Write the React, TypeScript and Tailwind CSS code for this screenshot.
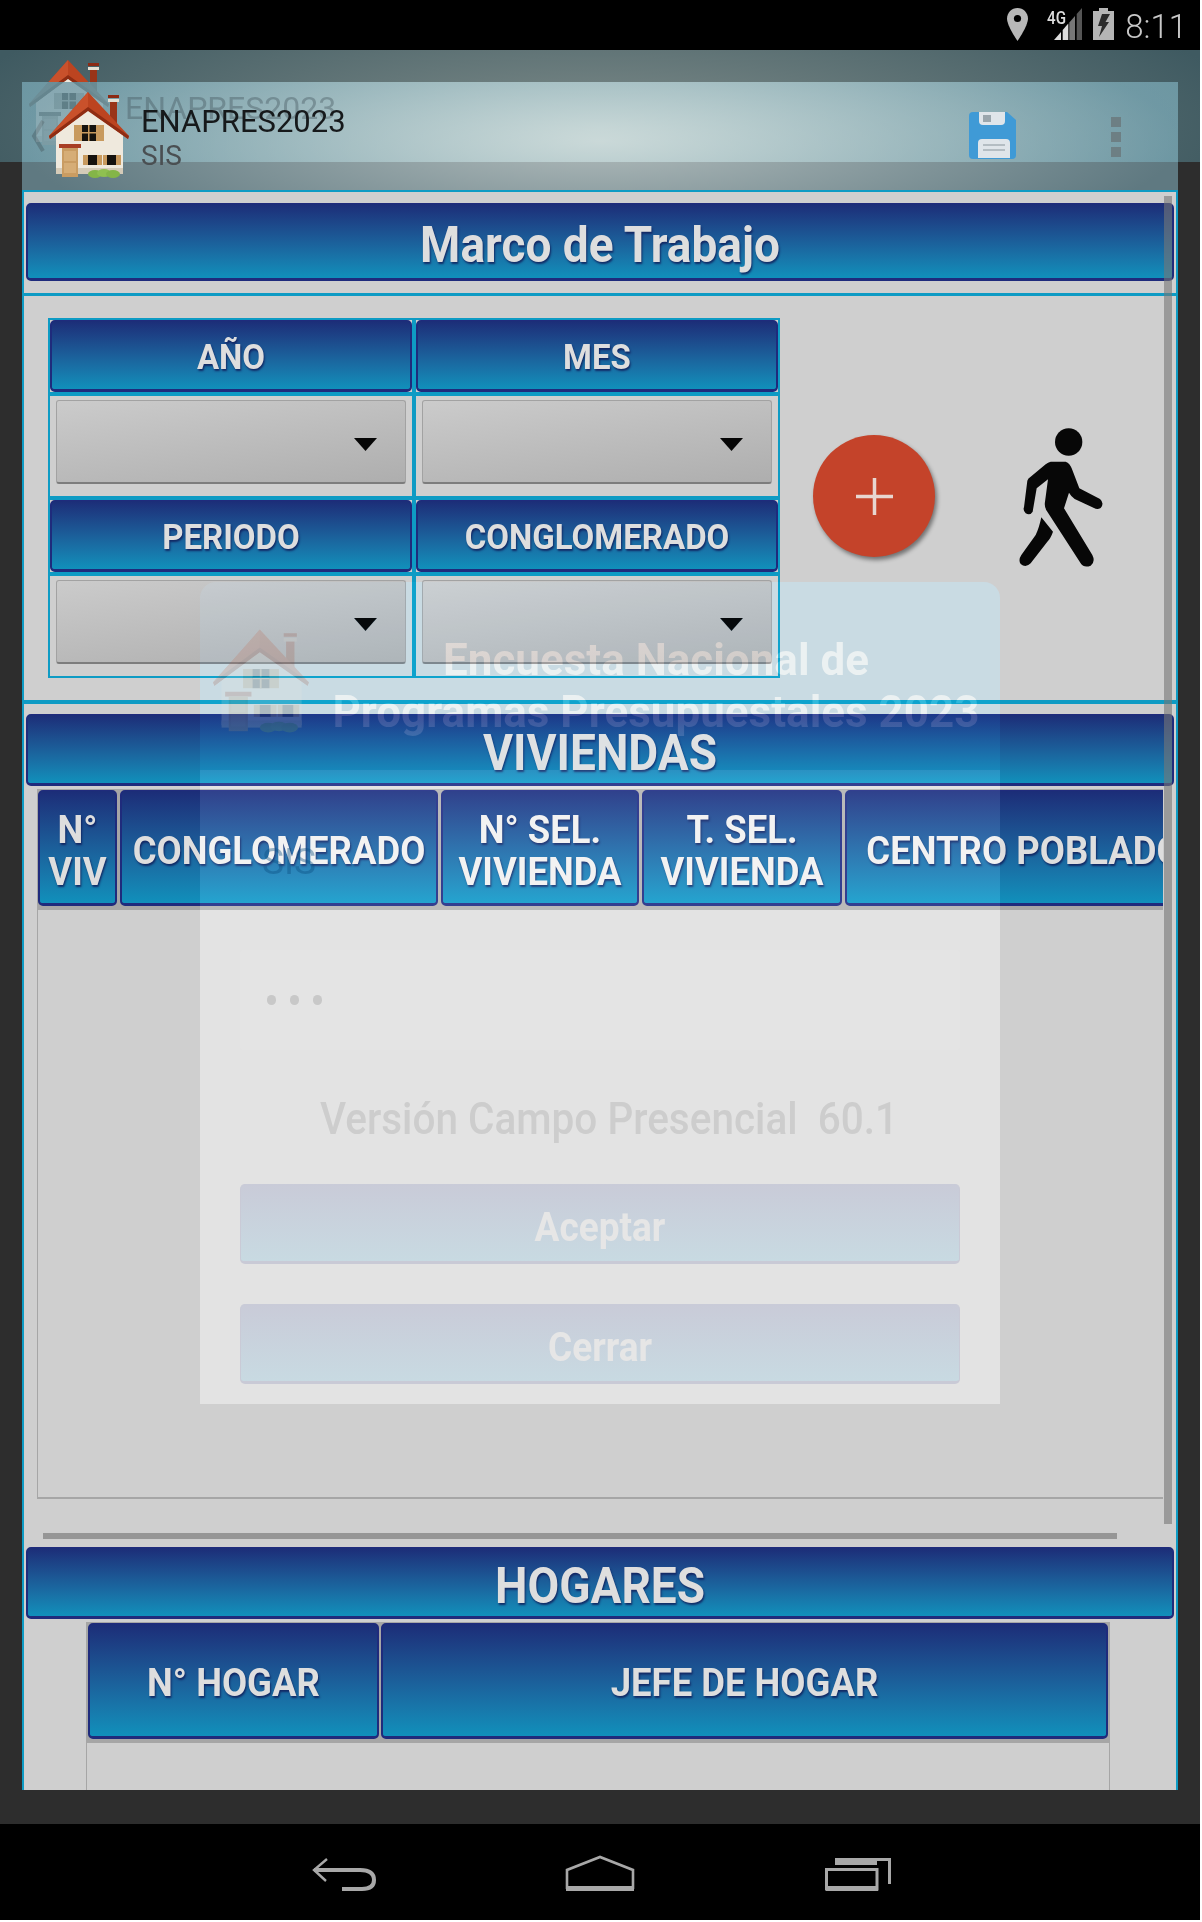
const CYAN = "border-[#0e9bc4]";
const BLUE_HEAD =
  "flex items-center justify-center rounded-[5px] border-x-2 border-t border-b-[3px] border-[#1f2b7c] bg-linear-to-b from-[#1c2d78] to-[#1090bb] text-center font-bold text-[#dedede] [text-shadow:1px_2px_2px_rgba(16,30,90,0.85)]";

function House({ className }: { className?: string }) {
  return (
    <svg viewBox="0 0 82 86" className={className}>
      <rect x="62" y="8" width="7" height="24" fill="#9a3418" />
      <rect x="60" y="3" width="11" height="3" fill="#8c2a14" />
      <rect x="60" y="7" width="11" height="3" fill="#e6dfd2" />
      <polygon points="8,40 40,14 75,40 75,80 8,80" fill="#efe9dd" />
      <rect x="8" y="76" width="67" height="6" fill="#d5cbb8" />
      <polygon points="40,0 81,44 80,47 40,18 2,47 1,44" fill="#bc4420" />
      <polygon points="40,0 1,44 2,47 40,18" fill="#c9512b" />
      <polygon points="40,19 2,47 1,44 40,15 81,44 80,47" fill="#8f2c12" />
      <rect x="26" y="33" width="30" height="16" fill="#c89a5e" />
      <rect x="34" y="33" width="14" height="16" fill="#15120e" />
      <rect x="34" y="40" width="14" height="1.5" fill="#c89a5e" />
      <rect x="40" y="33" width="1.5" height="16" fill="#c89a5e" />
      <rect x="11" y="52" width="22" height="4" fill="#a83e24" />
      <rect x="14" y="56" width="16" height="29" fill="#c99c62" />
      <rect x="16" y="59" width="12" height="10" fill="#d6ad76" />
      <rect x="16" y="71" width="12" height="10" fill="#d6ad76" />
      <rect x="35" y="63" width="19" height="10" fill="#c89a5e" />
      <rect x="40" y="63" width="9" height="10" fill="#15120e" />
      <rect x="55" y="63" width="18" height="10" fill="#c89a5e" />
      <rect x="59" y="63" width="9" height="10" fill="#15120e" />
      <ellipse cx="47" cy="82" rx="7" ry="4" fill="#84b548" />
      <ellipse cx="56" cy="81" rx="7" ry="4" fill="#8fc050" />
      <ellipse cx="65" cy="82" rx="7" ry="4" fill="#84b548" />
    </svg>
  );
}

function SaveIcon() {
  return (
    <svg viewBox="0 0 47 47" className="h-[47px] w-[47px]">
      <path d="M4 0H38L47 8V43Q47 47 43 47H4Q0 47 0 43V4Q0 0 4 0Z" fill="#3f9ad6" />
      <path d="M10 0H36V9Q36 13 32 13H14Q10 13 10 9Z" fill="#dfe5ea" />
      <rect x="14" y="3" width="8" height="7" fill="#9aa6ad" />
      <path d="M13 27H37Q41 27 41 31V46H9V31Q9 27 13 27Z" fill="#dfe5ea" />
      <rect x="14" y="32" width="22" height="2" fill="#b4bdc3" />
      <rect x="14" y="37" width="22" height="2" fill="#b4bdc3" />
    </svg>
  );
}

function StatusIcons() {
  return (
    <div className="flex items-start pt-2 pr-[13px]">
      <svg viewBox="0 0 21 33" className="h-[33px] w-[21px]">
        <path
          d="M10.5 0C4.7 0 0 4.7 0 10.5 0 18 10.5 33 10.5 33S21 18 21 10.5C21 4.7 16.3 0 10.5 0Z"
          fill="#b8b8b8"
        />
        <circle cx="10.5" cy="10.5" r="3.6" fill="#000" />
      </svg>
      <div className="relative ml-[26px] h-[32px] w-[28px]">
        <svg viewBox="0 0 28 32" className="h-[32px] w-[28px]">
          <polygon points="0,32 7,24 7,32" fill="#dcdcdc" />
          <polygon points="8.7,22 14.3,15.6 14.3,32 8.7,32" fill="#dcdcdc" />
          <polygon points="15.3,14.5 21,8 21,32 15.3,32" fill="#777" />
          <polygon points="22.7,6 28,0 28,32 22.7,32" fill="#555" />
        </svg>
        <span className="absolute top-[-3px] left-[-7px] origin-left scale-x-[0.8] text-[19px] leading-[26px] font-medium text-[#dcdcdc]">
          4G
        </span>
      </div>
      <svg viewBox="0 0 21 32" className="ml-[11px] h-[32px] w-[21px]">
        <path d="M6 0H15V3H21V32H0V3H6Z" fill="#b5b5b5" />
        <polygon points="9,6 17,6 12.5,14 16,14 6,29 9,18 5,18" fill="#2b2b2b" />
      </svg>
      <span className="ml-[11px] text-[33px] leading-[38px] font-light text-[#c8c8c8]">8:11</span>
    </div>
  );
}

function NavBar() {
  return (
    <div className="flex h-[96px] shrink-0 justify-center bg-black pt-[31px] pl-[2px]">
      <svg viewBox="0 0 64 33" className="mt-[3px] h-[33px] w-[64px]" fill="none" stroke="#a8a8a8">
        <path d="M15 1L2 12L14 23" strokeWidth="2.4" />
        <path d="M2 12H48Q62 12 62 22Q62 31 50 31H30" strokeWidth="4" />
      </svg>
      <svg viewBox="0 0 70 36" className="ml-[189px] h-[36px] w-[70px]" fill="none" stroke="#a8a8a8">
        <path d="M2 34V15L35 2L68 15V34" strokeWidth="2.6" />
        <path d="M1 33.5H69" strokeWidth="5" />
      </svg>
      <svg viewBox="0 0 66 33" className="mt-[3px] ml-[190px] h-[33px] w-[66px]" fill="none" stroke="#a8a8a8">
        <path d="M10 5H52" strokeWidth="4" />
        <path d="M10 1.5H64.5V26" strokeWidth="3" />
        <path d="M1.5 11.5H52V31H1.5Z" strokeWidth="3" />
        <path d="M1 30.5H53" strokeWidth="5" />
      </svg>
    </div>
  );
}

function SectionHeader({ title, tall }: { title: string; tall?: boolean }) {
  return (
    <div className={`${BLUE_HEAD} mx-[2px] ${tall ? "h-[78px]" : "h-[72px]"} pt-[7px] text-[46px] leading-none`}>
      <span className="scale-y-[1.08]">{title}</span>
    </div>
  );
}

function Spinner() {
  return (
    <div className="flex h-[84px] items-center justify-end rounded-[3px] border border-b-2 border-[#a2a2a2] border-b-[#7d7d7d] bg-[linear-gradient(172deg,#cbcbcb,#aeaeae)] pr-[28px]">
      <svg viewBox="0 0 23 13" className="mt-[5px] h-[13px] w-[23px]">
        <polygon points="0,0 23,0 11.5,13" fill="#060606" />
      </svg>
    </div>
  );
}

function FilterLabel({ text }: { text: string }) {
  return (
    <div className={`${BLUE_HEAD} h-[72px] pt-[2px] text-[33px] leading-none`}>
      <span className="scale-y-[1.08]">{text}</span>
    </div>
  );
}

function FilterTable() {
  const cell = `border-r-4 ${CYAN}`;
  const spinRow = `h-[108px] border-y-4 ${CYAN} px-[6px] pt-[4px]`;
  const lastRow = `h-[104px] border-t-4 ${CYAN} px-[6px] pt-[4px]`;
  return (
    <div className={`w-[732px] shrink-0 border-2 ${CYAN}`}>
      <div className="grid grid-cols-[366px_362px]">
        <div className={cell}>
          <FilterLabel text="AÑO" />
        </div>
        <FilterLabel text="MES" />
        <div className={`${cell} ${spinRow}`}>
          <Spinner />
        </div>
        <div className={spinRow}>
          <Spinner />
        </div>
        <div className={cell}>
          <FilterLabel text="PERIODO" />
        </div>
        <FilterLabel text="CONGLOMERADO" />
        <div className={`${cell} ${lastRow}`}>
          <Spinner />
        </div>
        <div className={lastRow}>
          <Spinner />
        </div>
      </div>
    </div>
  );
}

function Walker() {
  return (
    <svg viewBox="55 25 255 415" className="mt-[110px] ml-[84px] h-[139px] w-[85px]" fill="#070707">
      <circle cx="204" cy="66" r="41" />
      <path d="M150 125L195 125Q208 130 213 145L236 205L298 237Q312 250 300 264Q290 270 280 264L222 237Q212 230 205 218L190 265L275 405Q285 425 270 437Q250 445 240 430L140 275Q130 262 133 245L142 178L108 205L96 275Q88 288 75 280Q66 270 70 262L80 182Q82 175 90 170L135 133Q142 127 150 125Z" />
      <path d="M122 292L157 335Q150 355 140 365L90 430Q75 445 60 432Q52 420 62 405L105 345Q115 325 122 292Z" />
    </svg>
  );
}

function Fab() {
  return (
    <div className="mt-[117px] ml-[33px] flex h-[122px] w-[122px] shrink-0 items-center justify-center rounded-full bg-[#c4432a] shadow-[2px_3px_4px_rgba(0,0,0,0.45)]">
      <svg viewBox="0 0 37 37" className="h-[37px] w-[37px]" stroke="#e8d6d0" strokeWidth="3.5">
        <path d="M18.5 0V37M0 18.5H37" />
      </svg>
    </div>
  );
}

const VIV_COLS = [
  { w: "w-[79px]", lines: ["N°", "VIV"] },
  { w: "w-[318px]", lines: ["CONGLOMERADO"] },
  { w: "w-[198px]", lines: ["N° SEL.", "VIVIENDA"] },
  { w: "w-[200px]", lines: ["T. SEL.", "VIVIENDA"] },
  { w: "w-[358px]", lines: ["CENTRO POBLADO"] },
];

function ViviendasTable() {
  return (
    <div className="ml-[13px] w-[1126px]">
      <div className="mt-[3px] flex h-[121px] gap-[3px] overflow-hidden bg-[#a6a6a6] pt-[1px] pl-[1px]">
        {VIV_COLS.map((c) => (
          <div
            key={c.lines.join("")}
            className={`${BLUE_HEAD} ${c.w} h-[116px] shrink-0 flex-col pt-[7px] text-[36.5px] leading-[42px] whitespace-nowrap`}
          >
            {c.lines.map((l) => (
              <span key={l} className="scale-y-[1.08]">
                {l}
              </span>
            ))}
          </div>
        ))}
      </div>
      <div className="h-[589px] border-b-2 border-l border-[#a6a6a6]" />
    </div>
  );
}

function HogaresTable() {
  return (
    <div className="ml-[62px] w-[1024px]">
      <div className="mt-[3px] flex h-[121px] gap-[2px] bg-[#a6a6a6] px-[2px] pt-[1px]">
        <div className={`${BLUE_HEAD} h-[116px] w-[291px] pt-[7px] text-[36.5px]`}>
          <span className="scale-y-[1.08]">N° HOGAR</span>
        </div>
        <div className={`${BLUE_HEAD} h-[116px] flex-1 pt-[7px] text-[36.5px]`}>
          <span className="scale-y-[1.08]">JEFE DE HOGAR</span>
        </div>
      </div>
      <div className="h-[60px] border-x border-[#a6a6a6]" />
    </div>
  );
}

function DialogGhost() {
  return (
    <>
      <div className="absolute top-[500px] left-[178px] h-[188px] w-[800px] rounded-t-[16px] bg-[#7fb0d0] opacity-50 mix-blend-soft-light" />
      <div className="absolute top-[500px] left-[178px] h-[188px] w-[800px] rounded-t-[16px] pt-[52px] pl-[112px] text-center text-[44px] leading-[52px] font-bold text-[#22160f] mix-blend-plus-lighter">
        <div>Encuesta Nacional de</div>
        <div className="whitespace-nowrap">Programas Presupuestales 2023</div>
      </div>
      <House className="absolute top-[545px] left-[190px] h-[108px] w-[98px] opacity-[0.16]" />
      <div className="absolute top-[688px] left-[178px] h-[634px] w-[800px] bg-[#141414] mix-blend-plus-lighter" />
      <div className="absolute top-[688px] left-[178px] flex h-[634px] w-[800px] flex-col">
        <div className="mt-[70px] ml-[62px] text-[37px] leading-[44px] text-[#0b4d80]/40">SIS</div>
        <div className="mx-[40px] mt-[66px] flex h-[100px] items-center gap-[14px] rounded-[4px] bg-white/5 pl-[27px]">
          <span className="h-[10px] w-[9px] rounded-full bg-[#c8c8c8]" />
          <span className="h-[10px] w-[9px] rounded-full bg-[#c8c8c8]" />
          <span className="h-[10px] w-[9px] rounded-full bg-[#c8c8c8]" />
        </div>
        <div className="mt-[46px] scale-y-[1.08] pl-[18px] text-center text-[40.5px] leading-[47px] font-medium whitespace-pre text-[#cdcdcd]">
          {"Versión Campo Presencial  60.1"}
        </div>
        <div className="mx-[40px] mt-[41px] flex flex-col gap-[40px]">
          {["Aceptar", "Cerrar"].map((t) => (
            <div
              key={t}
              className="flex h-[80px] items-center justify-center rounded-[5px] border-x border-b-[3px] border-[#c9cad6] bg-linear-to-b from-[#c9cbd8] to-[#c8dae2] pt-[10px] text-[37px] font-bold text-[#e6e6e6]"
            >
              <span className="scale-y-[1.08]">{t}</span>
            </div>
          ))}
        </div>
      </div>
    </>
  );
}

export default function App() {
  return (
    <div className="flex h-[1920px] w-[1200px] flex-col overflow-hidden bg-black font-[Roboto,sans-serif]">
      <div className="flex h-[50px] shrink-0 justify-end">
        <StatusIcons />
      </div>

      <div className="relative flex-1 bg-[#2d2d2d]">
        {/* activity underneath the dialog window */}
        <div className="absolute inset-x-0 top-0 h-[112px] bg-[radial-gradient(ellipse_55%_150%_at_50%_70%,#7f8c8a,#3f5a61)]">
          <div className="relative h-[32px] overflow-hidden">
            <House className="absolute top-[10px] left-[28px] h-[86px] w-[82px]" />
          </div>
        </div>

        <div className="relative mx-[22px] mt-[32px] h-[1708px] overflow-hidden">
          {/* action bar */}
          <div className="relative flex h-[108px] items-start bg-[radial-gradient(ellipse_50%_120%_at_50%_55%,rgba(240,255,255,0.68),rgba(170,235,255,0.4))] pt-[10px] pl-[26px]">
            <svg viewBox="0 0 14 32" className="absolute top-[38px] left-[9px] h-[32px] w-[14px] opacity-40" fill="none" stroke="#44565c" strokeWidth="4">
              <path d="M12 1L3 16L12 31" />
            </svg>
            <House className="absolute top-[-22px] left-[6px] h-[86px] w-[82px] opacity-20 grayscale" />
            <span className="absolute top-[8px] left-[103px] text-[32px] leading-[36px] text-[#44565c]/40">
              ENAPRES2023
            </span>
            <House className="relative h-[86px] w-[82px] shrink-0" />
            <div className="relative mt-[12px] ml-[11px]">
              <div className="text-[31px] leading-[36px] text-[#16191b]">ENAPRES2023</div>
              <div className="text-[28px] leading-[32px] text-[#4a4f52]">SIS</div>
            </div>
            <div className="mt-[20px] ml-auto">
              <SaveIcon />
            </div>
            <div className="mt-[25px] mr-[57px] ml-[95px] flex flex-col gap-[5px]">
              <span className="h-[10px] w-[10px] bg-[#6d7f84]" />
              <span className="h-[10px] w-[10px] bg-[#6d7f84]" />
              <span className="h-[10px] w-[10px] bg-[#6d7f84]" />
            </div>
          </div>

          {/* window content */}
          <div className={`relative h-[1600px] overflow-hidden border-x-2 border-t-2 ${CYAN} bg-[#cfcfcf]`}>
            <div className="absolute top-[390px] left-[176px] h-[188px] w-[800px] rounded-t-[16px] bg-[#c9d7de]" />
            <div className="relative">
              <div className="pt-[11px]">
                <SectionHeader title="Marco de Trabajo" tall />
              </div>
              <div className="mt-[12px] h-[3px] bg-[#0e9bc4]" />
              <div className="flex h-[404px] items-start pt-[22px] pl-[24px]">
                <FilterTable />
                <Fab />
                <Walker />
              </div>
              <div className="h-[4px] bg-[#0e9bc4]" />
              <div className="mt-[10px]">
                <SectionHeader title="VIVIENDAS" />
              </div>
              <ViviendasTable />
              <div className="mt-[34px] ml-[19px] h-[6px] w-[1074px] bg-[#969696]" />
              <div className="mt-[8px]">
                <SectionHeader title="HOGARES" />
              </div>
              <HogaresTable />
            </div>
            <div className="absolute top-[4px] left-[1140px] h-[1328px] w-[8px] bg-[#777]/60" />
          </div>

          <DialogGhost />
        </div>
      </div>

      <NavBar />
    </div>
  );
}
